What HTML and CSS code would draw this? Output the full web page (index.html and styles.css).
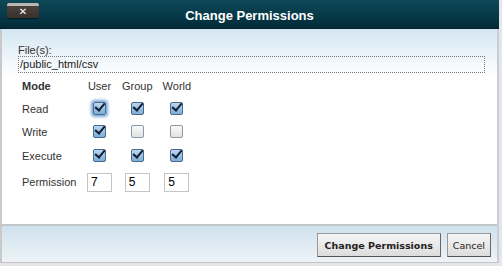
FILE: index.html
```html
<!doctype html>
<html lang="en">
<head>
<meta charset="UTF-8">
<title>Change Permissions</title>
<link rel="stylesheet" href="styles.css">
</head>
<body>
	<div class="dialog">
		<div class="hd">
			<button class="close">&#x2715;</button>
			<span class="title">Change Permissions</span>
		</div>
		<div class="bd">
			<div class="files-label">File(s):</div>
			<div class="files">/public_html/csv</div>
			<table class="perm">
				<tr class="r-head">
					<th class="mode">Mode</th>
					<td>User</td>
					<td>Group</td>
					<td>World</td>
				</tr>
				<tr>
					<td class="lbl">Read</td>
					<td><span class="box on focus"></span></td>
					<td><span class="box on"></span></td>
					<td><span class="box on"></span></td>
				</tr>
				<tr>
					<td class="lbl">Write</td>
					<td><span class="box on"></span></td>
					<td><span class="box"></span></td>
					<td><span class="box"></span></td>
				</tr>
				<tr class="r-exec">
					<td class="lbl">Execute</td>
					<td><span class="box on"></span></td>
					<td><span class="box on"></span></td>
					<td><span class="box on"></span></td>
				</tr>
				<tr class="r-perm">
					<td class="lbl">Permission</td>
					<td><input type="text" value="7" class="num"></td>
					<td><input type="text" value="5" class="num"></td>
					<td><input type="text" value="5" class="num"></td>
				</tr>
			</table>
		</div>
		<div class="ft">
			<button class="btn primary">Change Permissions</button>
			<button class="btn">Cancel</button>
		</div>
	</div>
</body>
</html>
```

FILE: styles.css
```css
html, body{
	margin:0; padding:0;
	background:#e4e6ea;
}
body{
	font-family:"Liberation Sans", Arial, sans-serif;
	font-size:11px; color:#222;
	width:502px; height:266px; overflow:hidden;
}
.dialog{
	width:495px; height:262px;
	border-left:2px solid #c9c9c9;
	border-right:2px solid #c9ced6;
	border-bottom:1px solid #c4c4c4;
	background:#fff;
	display:flex; flex-direction:column;
}
.hd{
	height:28px; margin-left:-2px; margin-right:-2px;
	background:linear-gradient(#0f4858, #053544 70%, #032a36);
	border-bottom:1px solid #02222c;
	display:flex; align-items:center;
	position:relative;
}
.close{
	position:absolute; left:7px; top:3px;
	width:32px; height:15px;
	border:0; border-radius:2px; padding:0;
	background:linear-gradient(#b9b6b3 0, #b9b6b3 3px, #4a403c 3px, #3a312d);
	color:#fff; font-size:10px; font-weight:bold; line-height:17px;
	font-family:"DejaVu Sans", sans-serif;
	box-shadow:0 1px 1px rgba(0,0,0,.5);
}
.title{
	flex:1; text-align:center;
	color:#fff; font-weight:bold; font-size:13px;
	padding-top:3px;
}
.bd{
	flex:1;
	background:linear-gradient(#d3e6f1, #f4f9fc 35px, #fff 50px);
	padding:15px 16px 0 16px;
}
.files-label{
	font-size:11px; line-height:12px;
	color:#333;
}
.files{
	border:1px dotted #777;
	height:15px; line-height:15px;
	padding-left:1px;
	width:464px;
	color:#222;
}
.perm{
	margin-top:1px;
	border-collapse:collapse;
}
.perm th, .perm td{
	padding:0 10px 0 0; height:23px;
	text-align:center; font-size:11px; color:#333;
}
.perm th.mode, .perm td.lbl{
	width:65px; padding:0 0 0 4px;
	text-align:left;
}
.perm th.mode{ font-weight:bold; }
.perm tr.r-exec td{ height:25px; }
.perm tr.r-perm td{ height:28px; }
.box{
	display:inline-block; width:11px; height:11px;
	border:1px solid #8a9aa8; border-radius:2px;
	background:linear-gradient(#fafafa, #e2e2e2);
	vertical-align:middle; position:relative;
}
.box.on{
	border-color:#4a6a8a;
	background:linear-gradient(#bcd7ef, #7eaed8);
}
.box.on:after{
	content:""; position:absolute;
	left:3px; top:-2px; width:4px; height:8px;
	border:solid #0f1f33; border-width:0 2px 2px 0;
	transform:rotate(40deg);
}
.box.focus{ box-shadow:0 0 3px 2px #7aa8d8; }
.num{
	width:20px; height:17px; padding:0 0 0 3px; margin:0;
	border:1px solid #c4c4c4;
	font-family:"Liberation Sans", Arial, sans-serif; font-size:12px;
	vertical-align:middle;
}
.ft{
	height:36px;
	border-top:2px solid #c4c6c8;
	background:linear-gradient(#cfe1ee, #eef3f7);
	display:flex; justify-content:flex-end; align-items:center;
	gap:6px; padding-right:6px;
}
.btn{
	height:24px; padding:0 5px;
	font-family:"DejaVu Sans", Verdana, sans-serif; font-size:9.5px;
	color:#222;
	border:1px solid #999; border-right-color:#666; border-bottom-color:#555;
	background:linear-gradient(#f6f6f6, #dcdcdc);
	margin-top:2px;
}
.btn.primary{ font-weight:bold; padding:0 7px; }
```
